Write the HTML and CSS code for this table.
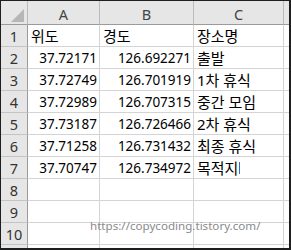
FILE: index.html
```html
<!DOCTYPE html>
<html lang="ko">
<head>
<meta charset="utf-8">
<link rel="stylesheet" href="styles.css">
</head>
<body>
<div class="sheet">
  <div class="grid">
    <div class="corner"><svg width="14" height="15" viewBox="0 0 14 15"><polygon points="13,1 13,14 0,14" fill="#b6b6b6"/></svg></div>
    <div class="ch">A</div><div class="ch">B</div><div class="ch">C</div><div class="ch end"></div>

    <div class="rh">1</div><div class="c txt">위도</div><div class="c txt">경도</div><div class="c txt">장소명</div><div class="c end"></div>
    <div class="rh">2</div><div class="c num">37.72171</div><div class="c num">126.692271</div><div class="c txt">출발</div><div class="c end"></div>
    <div class="rh">3</div><div class="c num">37.72749</div><div class="c num">126.701919</div><div class="c txt">1차 휴식</div><div class="c end"></div>
    <div class="rh">4</div><div class="c num">37.72989</div><div class="c num">126.707315</div><div class="c txt">중간 모임</div><div class="c end"></div>
    <div class="rh">5</div><div class="c num">37.73187</div><div class="c num">126.726466</div><div class="c txt">2차 휴식</div><div class="c end"></div>
    <div class="rh">6</div><div class="c num">37.71258</div><div class="c num">126.731432</div><div class="c txt">최종 휴식</div><div class="c end"></div>
    <div class="rh">7</div><div class="c num">37.70747</div><div class="c num">126.734972</div><div class="c txt">목적지<span class="caret"></span></div><div class="c end"></div>
    <div class="rh">8</div><div class="c"></div><div class="c"></div><div class="c"></div><div class="c end"></div>
    <div class="rh">9</div><div class="c"></div><div class="c"></div><div class="c"></div><div class="c end"></div>
    <div class="rh">10</div><div class="c"></div><div class="c"></div><div class="c"></div><div class="c end"></div>

    <div class="rh part"></div><div class="c part"></div><div class="c part"></div><div class="c part"></div><div class="c part end"></div>
  </div>
  <div class="watermark">https://copycoding.tistory.com/</div>
</div>
</body>
</html>
```
FILE: styles.css
```css
html, body {
  margin: 0;
  padding: 0;
  background: #ffffff;
}

.sheet {
  position: relative;
  box-sizing: border-box;
  width: 291px;
  height: 250px;
  border-top: 1px solid #1e1e1e;
  border-left: 1px solid #1e1e1e;
  border-right: 2px solid #1e1e1e;
  border-bottom: 2px solid #1e1e1e;
  overflow: hidden;
  font-family: "Noto Sans", "Noto Sans CJK KR", sans-serif;
  font-size: 13.5px;
  color: #000;
}

.grid {
  display: grid;
  grid-template-columns: 27px 72px 94px 90px 5px;
  grid-template-rows: 24px repeat(10, 22px) 3px;
}

.grid > div {
  box-sizing: border-box;
  border-right: 1px solid #d4d4d4;
  border-bottom: 1px solid #d4d4d4;
  display: flex;
  align-items: center;
  overflow: hidden;
  white-space: nowrap;
}

.corner {
  background: #e6e6e6;
  border-right-color: #bcbcbc !important;
  border-bottom-color: #9b9b9b !important;
  justify-content: flex-end;
  align-items: flex-end !important;
  padding: 0 2px 1px 0;
}

.corner svg {
  display: block;
}

.ch {
  background: #e6e6e6;
  border-right-color: #bcbcbc !important;
  border-bottom-color: #9b9b9b !important;
  justify-content: center;
  color: #444;
  font-size: 14.5px;
  padding-top: 2px;
}

.rh {
  background: #e6e6e6;
  border-right-color: #9b9b9b !important;
  border-bottom-color: #c4c4c4 !important;
  justify-content: center;
  color: #333;
  font-size: 14.5px;
}

.num {
  justify-content: flex-end;
  padding-right: 2px;
}

.txt {
  justify-content: flex-start;
  padding-left: 3px;
  font-size: 15px;
}

.end {
  border-right: none !important;
}

.part {
  border-bottom: none !important;
}

.caret {
  display: inline-block;
  width: 1px;
  height: 12px;
  margin-left: 1px;
  background: #2f6fd6;
}

.watermark {
  position: absolute;
  left: 89px;
  top: 217px;
  font-family: "Noto Sans", sans-serif;
  font-size: 11.6px;
  color: #8a8a8a;
  white-space: nowrap;
}
```
